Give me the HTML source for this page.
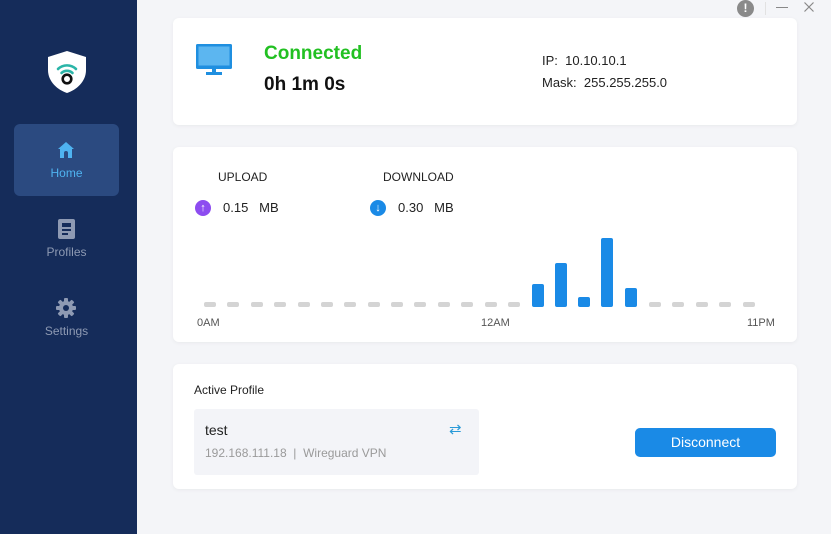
<!DOCTYPE html>
<html><head><meta charset="utf-8"><style>
*{margin:0;padding:0;box-sizing:border-box}
body{width:831px;height:534px;background:#f4f5f8;font-family:"Liberation Sans",sans-serif;position:relative;overflow:hidden;color:#222}
.a{position:absolute}
.side{left:0;top:0;width:137px;height:534px;background:#152c5a}
.card{background:#fff;border-radius:6px;box-shadow:0 1px 4px rgba(0,0,0,.05)}
.nav{width:105px;text-align:center;font-size:12px;color:#8e9ab3}
.dash{position:absolute;top:302px;width:12px;height:5px;border-radius:2px;background:#d4d4d4}
.bar{position:absolute;width:12px;border-radius:2px;background:#1a8ae6;bottom:227px}
</style></head><body>
<div class="a side"></div>
<svg class="a" style="left:46px;top:50px" width="42" height="44" viewBox="0 0 42 44">
<path d="M21 1 L40 7 L40 20 C40 32 30 40 21 43 C12 40 2 32 2 20 L2 7 Z" fill="#fff"/>
<path d="M12 19 A13 13 0 0 1 30 19" stroke="#2bb5a8" stroke-width="2.6" fill="none" stroke-linecap="round"/>
<path d="M15.5 23 A8 8 0 0 1 26.5 23" stroke="#2bb5a8" stroke-width="2.6" fill="none" stroke-linecap="round"/>
<circle cx="21" cy="29" r="4.3" stroke="#111" stroke-width="2.6" fill="none"/>
</svg>
<div class="a" style="left:14px;top:124px;width:105px;height:72px;background:#2b4a80;border-radius:6px"></div>
<svg class="a" style="left:57px;top:141px" width="18" height="18" viewBox="0 0 18 18"><path d="M9 1 L17 8 L15 8 L15 17 L11 17 L11 12 A2 2 0 0 0 7 12 L7 17 L3 17 L3 8 L1 8 Z" fill="#4fb3f0"/></svg>
<div class="a nav" style="left:14px;top:166px;color:#4fb3f0">Home</div>
<svg class="a" style="left:58px;top:219px" width="17" height="20" viewBox="0 0 17 20"><rect x="0" y="0" width="17" height="20" rx="2" fill="#8e9ab3"/><rect x="4" y="4" width="9" height="4" fill="#152c5a"/><rect x="4" y="10" width="9" height="2" fill="#152c5a"/><rect x="4" y="14" width="6" height="2" fill="#152c5a"/></svg>
<div class="a nav" style="left:14px;top:245px">Profiles</div>
<svg class="a" style="left:56px;top:298px" width="20" height="20" viewBox="0 0 20 20"><g fill="#8e9ab3"><circle cx="10" cy="10" r="7"/><rect x="8" y="0" width="4" height="20" rx="1"/><rect x="0" y="8" width="20" height="4" rx="1"/><rect x="8" y="0" width="4" height="20" rx="1" transform="rotate(45 10 10)"/><rect x="8" y="0" width="4" height="20" rx="1" transform="rotate(-45 10 10)"/></g><circle cx="10" cy="10" r="3" fill="#152c5a"/></svg>
<div class="a nav" style="left:14px;top:324px">Settings</div>

<div class="a" style="left:737px;top:0px;width:17px;height:17px;border-radius:50%;background:#8a8a8a;color:#fff;font-size:12px;font-weight:bold;text-align:center;line-height:17px">!</div>
<div class="a" style="left:765px;top:2px;width:1px;height:13px;background:#e2e2e2"></div>
<div class="a" style="left:776px;top:7px;width:12px;height:1px;background:#888"></div>
<svg class="a" style="left:804px;top:2px" width="10" height="10" viewBox="0 0 10 10"><path d="M0.5 0.5L9.5 9.5M9.5 0.5L0.5 9.5" stroke="#888" stroke-width="1.2"/></svg>

<div class="a card" style="left:173px;top:18px;width:624px;height:107px"></div>
<svg class="a" style="left:195px;top:44px" width="38" height="32" viewBox="0 0 38 32"><rect x="1" y="0" width="36" height="25" rx="1.5" fill="#1f8fe0"/><rect x="3.5" y="2.5" width="31" height="19" fill="#5cb6f0"/><rect x="17" y="25" width="4" height="4" fill="#1f8fe0"/><rect x="11" y="28" width="16" height="3" fill="#1f8fe0"/></svg>
<div class="a" style="left:264px;top:43px;font-size:19px;font-weight:bold;color:#22c022">Connected</div>
<div class="a" style="left:264px;top:74px;font-size:19px;font-weight:bold;color:#111">0h 1m 0s</div>
<div class="a" style="left:542px;top:53px;font-size:13px">IP:&nbsp; 10.10.10.1</div>
<div class="a" style="left:542px;top:75px;font-size:13px">Mask:&nbsp; 255.255.255.0</div>

<div class="a card" style="left:173px;top:147px;width:624px;height:195px"></div>
<div class="a" style="left:218px;top:170px;font-size:12px">UPLOAD</div>
<div class="a" style="left:383px;top:170px;font-size:12px">DOWNLOAD</div>
<div class="a" style="left:195px;top:200px;width:16px;height:16px;border-radius:50%;background:#8d4cf0;color:#fff;font-size:11px;text-align:center;line-height:16px;font-weight:bold">↑</div>
<div class="a" style="left:223px;top:200px;font-size:13px">0.15&nbsp;&nbsp; MB</div>
<div class="a" style="left:370px;top:200px;width:16px;height:16px;border-radius:50%;background:#1a8ae6;color:#fff;font-size:11px;text-align:center;line-height:16px;font-weight:bold">↓</div>
<div class="a" style="left:398px;top:200px;font-size:13px">0.30&nbsp;&nbsp; MB</div>
<div class="dash" style="left:204px"></div><div class="dash" style="left:227px"></div><div class="dash" style="left:251px"></div><div class="dash" style="left:274px"></div><div class="dash" style="left:298px"></div><div class="dash" style="left:321px"></div><div class="dash" style="left:344px"></div><div class="dash" style="left:368px"></div><div class="dash" style="left:391px"></div><div class="dash" style="left:414px"></div><div class="dash" style="left:438px"></div><div class="dash" style="left:461px"></div><div class="dash" style="left:485px"></div><div class="dash" style="left:508px"></div>
<div class="bar" style="left:532px;height:23px"></div>
<div class="bar" style="left:555px;height:44px"></div>
<div class="bar" style="left:578px;height:10px"></div>
<div class="bar" style="left:601px;height:69px"></div>
<div class="bar" style="left:625px;height:19px"></div>
<div class="dash" style="left:649px"></div><div class="dash" style="left:672px"></div><div class="dash" style="left:696px"></div><div class="dash" style="left:719px"></div><div class="dash" style="left:743px"></div>
<div class="a" style="left:197px;top:317px;font-size:11px;color:#555">0AM</div>
<div class="a" style="left:481px;top:317px;font-size:11px;color:#555">12AM</div>
<div class="a" style="left:747px;top:317px;font-size:11px;color:#555">11PM</div>

<div class="a card" style="left:173px;top:364px;width:624px;height:125px"></div>
<div class="a" style="left:194px;top:383px;font-size:12px">Active Profile</div>
<div class="a" style="left:194px;top:409px;width:285px;height:66px;background:#f3f4f8;border-radius:3px"></div>
<div class="a" style="left:205px;top:422px;font-size:14px">test</div>
<div class="a" style="left:205px;top:446px;font-size:12px;color:#9a9a9a">192.168.111.18&nbsp; |&nbsp; Wireguard VPN</div>
<div class="a" style="left:449px;top:420px;font-size:15px;color:#2a9ad8">⇄</div>
<div class="a" style="left:635px;top:428px;width:141px;height:29px;background:#1a8ae6;border-radius:5px;color:#fff;font-size:14px;text-align:center;line-height:29px">Disconnect</div>
</body></html>
